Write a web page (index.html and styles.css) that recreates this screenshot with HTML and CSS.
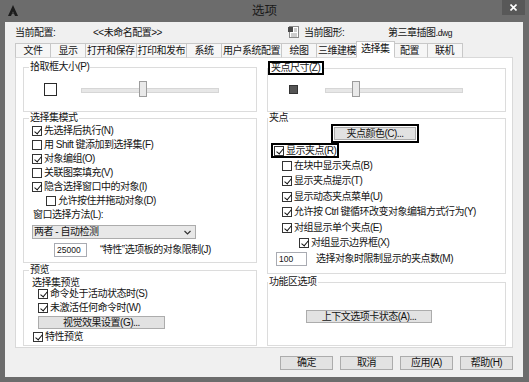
FILE: index.html
```html
<!DOCTYPE html>
<html lang="zh-CN">
<head>
  <meta charset="UTF-8">
  <meta name="viewport" content="width=device-width, initial-scale=1.0">
  <title>选项</title>
  <link rel="stylesheet" href="styles.css">
</head>
<body>
  <div class="window">
    <!-- Title bar -->
    <div class="titlebar">
      <svg class="app-icon" width="10" height="11" viewBox="0 0 10 11">
        <polygon points="5,0 10,11 7,11 5,6.5 3,11 0,11" fill="#1c1c1c"/>
        <polygon points="5,6.5 6.2,9 3.8,9" fill="#3a3a3a"/>
      </svg>
      <span class="title">选项</span>
      <span class="close">
        <svg width="7" height="7" viewBox="0 0 7 7">
          <path d="M0.5 0.5 L6.5 6.5 M6.5 0.5 L0.5 6.5" stroke="#fff" stroke-width="1.6"/>
        </svg>
      </span>
    </div>

    <div class="client">
      <!-- Current profile / drawing -->
      <div class="info-row">
        <span class="info-label">当前配置:</span>
        <span class="info-value">&lt;&lt;未命名配置&gt;&gt;</span>
        <svg class="doc-icon" width="11" height="12" viewBox="0 0 11 12">
          <rect x="1.5" y="0.5" width="9" height="11" fill="#fff" stroke="#8a8a8a"/>
          <rect x="0" y="1" width="5" height="5" fill="#4a4a4a"/>
          <path d="M3 8 H9 M3 10 H9 M6 3 H9 M6 5 H9" stroke="#9a9a9a"/>
        </svg>
        <span class="info-label info-label-drawing">当前图形:</span>
        <span>第三章插图.<span class="ext">dwg</span></span>
      </div>

      <!-- Tabs -->
      <div class="tabs">
        <span class="tab">文件</span>
        <span class="tab">显示</span>
        <span class="tab">打开和保存</span>
        <span class="tab">打印和发布</span>
        <span class="tab">系统</span>
        <span class="tab">用户系统配置</span>
        <span class="tab">绘图</span>
        <span class="tab">三维建模</span>
        <span class="tab active">选择集</span>
        <span class="tab">配置</span>
        <span class="tab">联机</span>
      </div>

      <!-- Tab page: 选择集 -->
      <div class="panel">
        <div class="col col-left">
          <fieldset class="group group-pickbox">
            <legend>拾取框大小(P)</legend>
            <div class="size-row pick-row">
              <span class="pick-square"></span>
              <div class="slider"><span class="thumb"></span></div>
            </div>
          </fieldset>

          <fieldset class="group group-mode">
            <legend>选择集模式</legend>
            <div class="rows">
              <label class="row"><span class="box on"></span>先选择后执行(N)</label>
              <label class="row"><span class="box"></span>用 Shift 键添加到选择集(F)</label>
              <label class="row"><span class="box on"></span>对象编组(O)</label>
              <label class="row"><span class="box"></span>关联图案填充(V)</label>
              <label class="row"><span class="box on"></span>隐含选择窗口中的对象(I)</label>
              <label class="row nested"><span class="box"></span>允许按住并拖动对象(D)</label>
              <div class="row text-row">窗口选择方法(L):</div>
              <div class="select">
                <span>两者 - 自动检测</span>
                <svg width="7" height="5" viewBox="0 0 7 5">
                  <path d="M0.5 1 L3.5 4 L6.5 1" fill="none" stroke="#333" stroke-width="1.2"/>
                </svg>
              </div>
              <div class="row input-row limit-row">
                <span class="input input-wide">25000</span>
                <span class="input-label">“特性”选项板的对象限制(J)</span>
              </div>
            </div>
          </fieldset>

          <fieldset class="group group-preview">
            <legend>预览</legend>
            <div class="rows">
              <div class="row sub-title">选择集预览</div>
              <label class="row indent"><span class="box on"></span>命令处于活动状态时(S)</label>
              <label class="row indent"><span class="box on"></span>未激活任何命令时(W)</label>
              <span class="button btn-visual">视觉效果设置(G)...</span>
              <label class="row prop-row"><span class="box on"></span>特性预览</label>
            </div>
          </fieldset>
        </div>

        <div class="col col-right">
          <fieldset class="group group-gripsize">
            <legend class="marked">夹点尺寸(Z)</legend>
            <div class="size-row grip-row">
              <span class="grip-square"></span>
              <div class="slider"><span class="thumb"></span></div>
            </div>
          </fieldset>

          <fieldset class="group group-grips">
            <legend>夹点</legend>
            <div class="rows">
              <div class="color-row">
                <span class="marked-button"><span class="button btn-color">夹点颜色(C)...</span></span>
              </div>
              <label class="row grip-show"><span class="box on"></span>显示夹点(R)</label>
              <label class="row grip-item"><span class="box"></span>在块中显示夹点(B)</label>
              <label class="row grip-item"><span class="box on"></span>显示夹点提示(T)</label>
              <label class="row grip-item"><span class="box on"></span>显示动态夹点菜单(U)</label>
              <label class="row grip-item"><span class="box on"></span>允许按 Ctrl 键循环改变对象编辑方式行为(Y)</label>
              <label class="row grip-item"><span class="box on"></span>对组显示单个夹点(E)</label>
              <label class="row grip-item grip-nested"><span class="box on"></span>对组显示边界框(X)</label>
              <div class="row input-row count-row">
                <span class="input input-narrow">100</span>
                <span class="input-label">选择对象时限制显示的夹点数(M)</span>
              </div>
            </div>
          </fieldset>

          <fieldset class="group group-ribbon">
            <legend>功能区选项</legend>
            <span class="button btn-ribbon">上下文选项卡状态(A)...</span>
          </fieldset>
        </div>
      </div>

      <!-- Dialog buttons -->
      <div class="footer">
        <span class="button btn-footer">确定</span>
        <span class="button btn-footer">取消</span>
        <span class="button btn-footer">应用(A)</span>
        <span class="button btn-footer">帮助(H)</span>
      </div>
    </div>
  </div>
</body>
</html>
```

FILE: styles.css
```css
/* General styling */
* {
  box-sizing: border-box;
}

body {
  margin: 0;
  background-color: #6c6c6c;
  font-family: "Liberation Sans", "Noto Sans CJK SC", sans-serif;
  font-size: 10px;
  letter-spacing: -0.5px;
  color: #141414;
}

.window {
  width: 529px;
  height: 382px;
  display: flex;
  flex-direction: column;
}

/* Title bar */
.titlebar {
  height: 22px;
  display: flex;
  align-items: flex-start;
}

.app-icon {
  margin: 5px 0 0 8px;
}

.title {
  flex: 1;
  padding-left: 9px;
  text-align: center;
  font-size: 12.5px;
  line-height: 22px;
  letter-spacing: 0;
  color: #1a1a1a;
}

.close {
  width: 23px;
  height: 15px;
  margin-right: 4px;
  background-color: #585858;
  display: flex;
  align-items: center;
  justify-content: center;
}

/* Client area */
.client {
  height: 355px;
  margin: 0 6px 5px 5px;
  background-color: #f0f0f0;
  display: flex;
  flex-direction: column;
}

.info-row {
  height: 19px;
  padding-left: 10px;
  display: flex;
  align-items: center;
}

.info-label {
  width: 78px;
}

.info-value {
  width: 195px;
}

.doc-icon {
  margin-right: 5px;
}

.info-label-drawing {
  width: 84px;
}

.ext {
  font-size: 8.5px;
}

/* Tabs */
.tabs {
  height: 17px;
  margin-bottom: -1px;
  padding-left: 11px;
  display: flex;
  align-items: flex-end;
  position: relative;
  z-index: 1;
}

.tab {
  height: 15px;
  min-width: 36px;
  padding: 0 1px;
  margin-left: -1px;
  border: 1px solid #c8c8c8;
  border-bottom-color: #d9d9d9;
  background-color: #f6f6f6;
  text-align: center;
  line-height: 13px;
}

.tab.active {
  height: 17px;
  padding: 0 4px;
  margin: 0 -2px 0 -2px;
  background-color: #fff;
  border-bottom-color: #fff;
  line-height: 14px;
  position: relative;
  z-index: 2;
}

/* Tab page */
.panel {
  height: 291px;
  margin-left: 10px;
  width: 498px;
  padding: 3px 6px 0 7px;
  background-color: #fff;
  border: 1px solid #d9d9d9;
  display: flex;
  gap: 10px;
}

.col {
  display: flex;
  flex-direction: column;
}

.col-left {
  width: 234px;
}

.col-right {
  width: 239px;
}

.group {
  margin: 0;
  padding: 0;
  min-width: 0;
  border: 1px solid #dcdcdc;
}

.group legend {
  margin-left: 5px;
  padding: 0 1px;
  line-height: 12px;
}

.group-pickbox { height: 51px; }
.group-mode { height: 151px; }
.group-preview { height: 82px; margin-top: 1px; }
.group-gripsize { height: 51px; }
.group-grips { height: 162px; }
.group-ribbon { height: 70px; margin-top: 2px; }

.col-right .group legend {
  margin-left: 0;
}

.group-grips legend {
  margin-left: 2px;
}

legend.marked {
  padding: 0 2px 0 1px;
  border: 2px solid #000;
  line-height: 10px;
}

/* Size sliders */
.size-row {
  height: 16px;
  display: flex;
  align-items: center;
}

.pick-row {
  margin-top: 8px;
  padding-left: 20px;
}

.grip-row {
  margin-top: 6px;
  padding-left: 21px;
}

.pick-square {
  width: 13px;
  height: 13px;
  border: 1px solid #2a2a2a;
  background-color: #fff;
}

.grip-square {
  width: 9px;
  height: 9px;
  border: 1px solid #333;
  background-color: #555;
}

.slider {
  width: 138px;
  height: 16px;
  position: relative;
}

.pick-row .slider { margin-left: 24px; }
.grip-row .slider { margin-left: 27px; }

.slider::before {
  content: "";
  position: absolute;
  left: 0;
  right: 0;
  top: 7px;
  height: 3px;
  background-color: #e7e7e7;
  border: 1px solid #d6d6d6;
}

.thumb {
  position: absolute;
  top: 0;
  width: 8px;
  height: 16px;
  background-color: #e9e9e9;
  border: 1px solid #9c9c9c;
}

.pick-row .thumb { left: 58px; }
.grip-row .thumb { left: 27px; }

/* Check rows */
.rows {
  display: flex;
  flex-direction: column;
}

.group-mode .rows,
.group-preview .rows {
  padding-left: 8px;
}

.row {
  height: 14px;
  line-height: 12px;
  display: flex;
  align-items: center;
  white-space: nowrap;
}

.box {
  width: 10px;
  height: 10px;
  margin-right: 2px;
  flex-shrink: 0;
  border: 1px solid #333;
  background-color: #fff;
  position: relative;
}

.box.on::after {
  content: "";
  position: absolute;
  left: 2.5px;
  top: 0;
  width: 3px;
  height: 6px;
  border: solid #111;
  border-width: 0 1.6px 1.6px 0;
  transform: rotate(40deg);
}

.nested {
  padding-left: 14px;
}

.text-row {
  padding-left: 1px;
}

.select {
  width: 164px;
  height: 14px;
  margin-top: 3px;
  padding: 0 4px 0 1px;
  border: 1px solid #acacac;
  background-color: #e8e8e8;
  line-height: 12px;
  display: flex;
  align-items: center;
  justify-content: space-between;
}

.input-row {
  height: 14px;
}

.input {
  height: 14px;
  padding-left: 2px;
  border: 1px solid #a9abb2;
  background-color: #fff;
  font-size: 8.5px;
  letter-spacing: 0;
  line-height: 12px;
}

.limit-row {
  margin-top: 4px;
  padding-left: 22px;
}

.input-wide {
  width: 33px;
}

.limit-row .input-label {
  margin-left: 13px;
}

.sub-title {
  height: 11px;
  line-height: 11px;
  padding-top: 1px;
}

.indent {
  padding-left: 6px;
}

.prop-row {
  margin-top: 1px;
  padding-left: 1px;
}

/* Buttons */
.button {
  display: block;
  height: 13px;
  border: 1px solid #acacac;
  background-color: #e2e2e2;
  text-align: center;
  line-height: 11px;
  white-space: nowrap;
}

.btn-visual {
  width: 127px;
  margin: 1px 0 0 6px;
}

.color-row {
  height: 19px;
  padding-left: 63px;
}

.marked-button {
  display: block;
  width: 88px;
  height: 19px;
  padding: 1px;
  border: 2px solid #000;
}

.btn-color {
  width: 82px;
}

.grip-show {
  width: 68px;
  height: 15px;
  margin-left: 3px;
  padding-left: 1px;
  border: 2px solid #000;
  line-height: 11px;
}

.grip-item {
  height: 15.5px;
  padding-left: 14px;
}

.grip-nested {
  padding-left: 31px;
}

.count-row {
  margin-top: 1px;
  padding-left: 8px;
}

.input-narrow {
  width: 31px;
}

.count-row .input-label {
  margin-left: 9px;
}

.btn-ribbon {
  width: 126px;
  margin: 22px 0 0 38px;
}

/* Dialog buttons */
.footer {
  padding: 8px 10px 0 0;
  display: flex;
  justify-content: flex-end;
  gap: 7px;
}

.btn-footer {
  width: 53px;
  height: 14px;
  line-height: 12px;
}
```
